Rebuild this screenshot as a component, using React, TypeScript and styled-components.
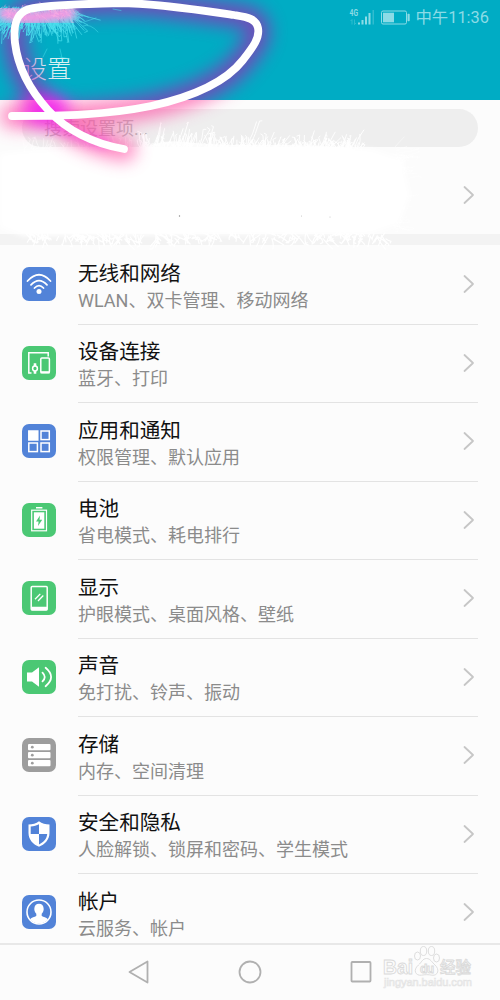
import React from "react";
import styled, { createGlobalStyle } from "styled-components";

const GlobalStyle = createGlobalStyle`
  body { margin: 0; background: #fcfcfc; }
  * { box-sizing: border-box; }
`;

const Screen = styled.div`
  position: relative;
  width: 500px;
  height: 1000px;
  overflow: hidden;
  display: flex;
  flex-direction: column;
  background: #fcfcfc;
  font-family: Roboto, "Noto Sans CJK SC", sans-serif;
`;

const Header = styled.header`
  height: 100px;
  flex: none;
  background: #00acc4;
  display: flex;
  flex-direction: column;
`;

const StatusBar = styled.div`
  height: 35px;
  padding: 1px 11px 0 0;
  display: flex;
  align-items: center;
  justify-content: flex-end;
  color: #8cdbe6;
  font-size: 16.4px;
  line-height: 34px;
`;

const StatusIcons = styled.svg`
  width: 64px;
  height: 34px;
  margin-right: 3px;
`;

const PageTitle = styled.h1`
  margin: 17px 0 0 22.5px;
  font-size: 24.5px;
  line-height: 36px;
  font-weight: 300;
  color: #d9f1f3;
`;

const SearchBox = styled.div`
  height: 38px;
  flex: none;
  margin: 9px 22px 0;
  padding-left: 22px;
  border-radius: 19px;
  background: #eeeeee;
  color: #b9b9b9;
  font-size: 18px;
  line-height: 40px;
`;

const AccountRow = styled.div`
  height: 87px;
  flex: none;
  display: flex;
  justify-content: flex-end;
  padding: 38px 25px 0 0;
`;

const Band = styled.div`
  height: 11px;
  flex: none;
  background: #f3f3f3;
`;

const List = styled.main`
  flex: 1;
  min-height: 0;
  overflow: hidden;
  padding-top: 1px;
`;

const Row = styled.div`
  height: 78.5px;
  display: flex;
  padding-left: 22px;
`;

const Tile = styled.svg<{ $color: string }>`
  width: 34px;
  height: 34px;
  flex: none;
  margin: 21px 22px 0 0;
  border-radius: 7px;
  background: ${(p) => p.$color};
`;

const RowBody = styled.div`
  flex: 1;
  margin-right: 22px;
  display: flex;
  justify-content: space-between;
  border-bottom: 1.5px solid #e3e3e3;
`;

const Labels = styled.div`
  padding-top: 12.5px;
  white-space: nowrap;
`;

const Name = styled.div`
  font-size: 20.6px;
  line-height: 30px;
  color: #111;
`;

const Detail = styled.div`
  font-size: 18px;
  line-height: 23px;
  color: #8b8b8b;
`;

const Arrow = styled.svg`
  width: 12px;
  height: 20px;
  flex: none;
`;

const ArrowSlot = styled.div`
  padding: 28px 3px 0 0;
`;

const NavBar = styled.nav`
  height: 57px;
  flex: none;
  border-top: 2px solid #e8e8e8;
  display: flex;
  justify-content: space-between;
  padding: 15px 127px 0 127px;
`;

const NavIcon = styled.svg`
  width: 24px;
  height: 24px;
  fill: none;
  stroke: #b0b0b0;
  stroke-width: 1.8;
  stroke-linejoin: round;
`;

const Doodle = styled.svg`
  position: absolute;
  left: 0;
  top: 0;
  width: 500px;
  height: 270px;
  pointer-events: none;
`;

const Watermark = styled.svg`
  position: absolute;
  left: 378px;
  top: 940px;
  width: 104px;
  height: 52px;
`;

const Chevron = () => (
  <Arrow viewBox="0 0 12 20" fill="none" stroke="#c6c6c6" strokeWidth="1.8" strokeLinecap="round" strokeLinejoin="round">
    <path d="M1.5 2 10 10 1.5 18" />
  </Arrow>
);

const BLUE = "#5283d8";
const GREEN = "#4bc874";
const GREY = "#9d9d9d";

const icons = {
  wifi: (
    <g fill="none" stroke="#fff" strokeWidth="1.8" strokeLinecap="round">
      <path d="M5.5 14Q17 1.5 28.5 14M9 17.8Q17 9.3 25 17.8M12.5 21Q17 16.3 21.5 21" />
      <circle cx="17" cy="24.5" r="2.5" fill="#fff" stroke="none" />
    </g>
  ),
  devices: (
    <g fill="none" stroke="#fff" strokeWidth="1.5">
      <path d="M9.5 27H6.8V6.8H26.2V10.5" />
      <rect x="18.8" y="12" width="8.6" height="14.5" rx="1" />
      <path d="M18.5 26.3h9.2" strokeWidth="2.2" />
      <circle cx="13" cy="22.5" r="2.4" />
      <path d="M13 17.3v2.8M13 25v2.8" strokeWidth="2.6" />
    </g>
  ),
  apps: (
    <g fill="none" stroke="#fff" strokeWidth="1.5">
      <rect x="6.8" y="7" width="9" height="9" fill="#fff" />
      <rect x="19" y="7" width="8.3" height="8.6" />
      <rect x="6.8" y="19" width="8.6" height="8.6" />
      <rect x="19" y="19" width="8.3" height="8.6" />
    </g>
  ),
  battery: (
    <g fill="none" stroke="#fff">
      <path d="M14 4.8h6.4" strokeWidth="1.5" />
      <rect x="9.7" y="7.2" width="14.8" height="20.6" strokeWidth="1.2" />
      <rect x="11.9" y="9.3" width="10.4" height="16.4" fill="#fff" stroke="none" />
      <path d="M18 12.5 14 18.4h2.6L16 23l4.2-6.2h-2.7z" fill={GREEN} stroke="none" />
    </g>
  ),
  display: (
    <g fill="none" stroke="#fff" strokeWidth="1.5">
      <rect x="9.2" y="5.4" width="16" height="23.6" rx="1" />
      <path d="M9.2 27.5h16" strokeWidth="3.5" />
      <path d="m13 18.3 5.3-5.4M16 20l5.3-5.5" strokeWidth="1.3" />
    </g>
  ),
  sound: (
    <g fill="none" stroke="#fff" strokeWidth="1.8" strokeLinecap="round">
      <path d="M5 12.4h5l7-5.2v19.6l-7-5.2H5z" fill="#fff" stroke="none" />
      <path d="M20.5 12.6q4.5 4.4 0 8.8M23.6 7.8q11 9.2 0 18.4" />
    </g>
  ),
  storage: (
    <g fill="#fff">
      <rect x="6" y="6" width="22.5" height="6.3" rx="1" />
      <rect x="6" y="14" width="22.5" height="6.3" rx="1" />
      <rect x="6" y="22" width="22.5" height="6.3" rx="1" />
      <g fill={GREY}>
        <circle cx="10.3" cy="9.2" r="1.4" />
        <circle cx="10.3" cy="17.2" r="1.4" />
        <circle cx="10.3" cy="25.2" r="1.4" />
      </g>
    </g>
  ),
  shield: (
    <g>
      <path d="M17 4.2C14 6.5 10.5 7.3 6.5 7.5V16c0 7 5 11.5 10.5 13.8C22.5 27.5 27.5 23 27.5 16V7.5C23.5 7.3 20 6.5 17 4.2z" fill="#fff" />
      <path d="M17 7.2V17H8.7V9.4C12 9.2 14.8 8.5 17 7.2zM17 17h8.2c-.4 5-3.7 8.3-8.2 10.4z" fill={BLUE} />
    </g>
  ),
  user: (
    <g>
      <circle cx="17" cy="17" r="12" fill={BLUE} stroke="#fff" strokeWidth="1.6" />
      <path d="M8 24.2c2-1.8 4.3-2 6.3-3.1v-2.3c-1.3-1.2-2-3-2-4.8 0-3.4 1.9-5.2 4.7-5.2s4.7 1.8 4.7 5.2c0 1.8-.7 3.6-2 4.8v2.3c2 1.1 4.3 1.3 6.3 3.1A11.5 11.5 0 0 1 8 24.2z" fill="#fff" />
    </g>
  ),
};

const rows: { icon: keyof typeof icons; color: string; name: string; detail: string }[] = [
  { icon: "wifi", color: BLUE, name: "无线和网络", detail: "WLAN、双卡管理、移动网络" },
  { icon: "devices", color: GREEN, name: "设备连接", detail: "蓝牙、打印" },
  { icon: "apps", color: BLUE, name: "应用和通知", detail: "权限管理、默认应用" },
  { icon: "battery", color: GREEN, name: "电池", detail: "省电模式、耗电排行" },
  { icon: "display", color: GREEN, name: "显示", detail: "护眼模式、桌面风格、壁纸" },
  { icon: "sound", color: GREEN, name: "声音", detail: "免打扰、铃声、振动" },
  { icon: "storage", color: GREY, name: "存储", detail: "内存、空间清理" },
  { icon: "shield", color: BLUE, name: "安全和隐私", detail: "人脸解锁、锁屏和密码、学生模式" },
  { icon: "user", color: BLUE, name: "帐户", detail: "云服务、帐户" },
];

// Seeded generator keeps the brush bristles identical on each render.
const seeded = (seed: number) => () => {
  seed = (seed * 16807) % 2147483647;
  return seed / 2147483647;
};

const bristles = (
  count: number,
  seed: number,
  origin: (r: () => number) => [number, number],
  reach: (x: number, y: number, r: () => number) => [number, number]
) => {
  const r = seeded(seed);
  let d = "";
  for (let i = 0; i < count; i++) {
    const [x, y] = origin(r);
    const [dx, dy] = reach(x, y, r);
    const bend = (r() - 0.5) * 4;
    d += `M${x.toFixed(1)} ${y.toFixed(1)}q${(dx / 2 + bend).toFixed(1)} ${(dy / 2).toFixed(1)} ${dx.toFixed(1)} ${dy.toFixed(1)}`;
    if (r() > 0.6) d += `l${((r() - 0.5) * 6).toFixed(1)} ${(r() * 4 - 2).toFixed(1)}`;
  }
  return d;
};

const topGrass = bristles(
  240, 77,
  (r) => [140 + r() * 225, 147 + r() * 4],
  (x, _y, r) => [(r() - 0.4) * 13, -4 - Math.pow(r(), 1.3) * (x < 215 ? 14 : 9)]
);
const tallGrass = bristles(
  22, 19,
  (r) => [155 + Math.pow(r(), 1.2) * 220, 146],
  (x, _y, r) => [r() * 10, (x < 255 ? -16 : -7) - r() * 9]
);
const leftGrass = bristles(
  45, 31,
  (r) => [24 + r() * 110, 147 + r() * 5],
  (_x, _y, r) => [(r() - 0.5) * 9, -3 - r() * 9]
);
const bottomGrass = bristles(
  210, 9,
  (r) => [24 + r() * 362, 231 + r() * 8],
  (_x, _y, r) => [(r() - 0.4) * 18, 1 + r() * 10]
);
const sideGrass = bristles(
  50, 51,
  (r) => [390 + r() * 8, 145 + r() * 85],
  (_x, y, r) => [4 + r() * 20, (r() - 0.5) * 12 + (y - 190) * 0.1]
);
// Sparks fan out from the glowing core in the corner.
const spark = bristles(
  320, 123,
  (r) => [r() * 72, 7 + r() * 10],
  (x, _y, r) => {
    const len = 5 + Math.pow(r(), 1.5) * 26;
    const angle = Math.PI / 2 + (38 - x) * 0.021 + (r() - 0.5) * 1.3;
    return [Math.cos(angle) * len, Math.sin(angle) * len * 0.95];
  }
);
const sparkCore = bristles(
  70, 83,
  (r) => [2 + r() * 70, 4 + r() * 13],
  (_x, _y, r) => [(r() - 0.3) * 10, (r() - 0.2) * 9]
);

const LOOP =
  "M12 116C64 116 107 115 151 106C192 97 225 83 243 60C253 47 260 38 258 28C256 18 246 17 234 15C200 10 154 3 120 3C90 4 50 4 29 9C16 13 13 25 15 43C18 68 29 89 48 110C66 130 94 144 124 149";

const HandDrawing = () => (
  <Doodle viewBox="0 0 500 270" fill="none" strokeLinecap="round">
    <defs>
      <filter id="glow" x="-30%" y="-50%" width="160%" height="200%" colorInterpolationFilters="sRGB">
        <feGaussianBlur stdDeviation="8.5" />
      </filter>
      <filter id="soft" x="-30%" y="-100%" width="160%" height="300%" colorInterpolationFilters="sRGB">
        <feGaussianBlur stdDeviation="4" />
      </filter>
      <filter id="feather" x="-10%" y="-20%" width="120%" height="140%">
        <feGaussianBlur stdDeviation="2.5" />
      </filter>
      <clipPath id="overHeader"><rect width="500" height="100" /></clipPath>
      <clipPath id="overPage"><rect y="100" width="500" height="170" /></clipPath>
    </defs>
    <path d="M0 154C60 146 110 152 140 149H370L404 160V170L410 195L399 224L370 234L23 236L0 227Z" fill="#fff" filter="url(#feather)" />
    <path d="M140 150Q160 139 185 142T235 145T290 145T350 148L365 155L140 160Z" fill="#fff" opacity=".8" />
    <path d={topGrass} stroke="#fff" strokeWidth="1" opacity=".9" />
    <path d={tallGrass} stroke="#fff" strokeWidth="0.9" />
    <path d={leftGrass} stroke="#fff" strokeWidth="0.8" opacity="0.7" />
    <path d={bottomGrass} stroke="#fff" strokeWidth="1.2" />
    <path d={sideGrass} stroke="#fff" strokeWidth="0.7" opacity=".6" />
    <g clipPath="url(#overHeader)">
      <path d={LOOP} stroke="#a520b4" strokeWidth="24" opacity="0.68" filter="url(#glow)" />
    </g>
    <g clipPath="url(#overPage)">
      <path d={LOOP} stroke="#ff4aa2" strokeWidth="24" opacity="0.68" filter="url(#glow)" />
    </g>
    <ellipse cx="46" cy="110" rx="23" ry="15" fill="#ef1cf5" opacity="0.9" filter="url(#glow)" />
    <path d="M58 126Q75 137 105 143" stroke="#f52cec" strokeWidth="12" opacity="0.35" filter="url(#soft)" />
    <path d={spark} stroke="#4be2ee" strokeWidth="0.8" opacity="0.85" />
    <path d="M83 26Q90 23 98 32M84 22L96 18M47 49Q45 53 43 57M60 49l2 9M60 57l10 2M113 9l8 1.5" stroke="#4be2ee" strokeWidth=".7" opacity=".7" />
    <path d="M4 13L30 18Q50 15 70 13" stroke="#ff94e2" strokeWidth="13" filter="url(#soft)" />
    <path d={sparkCore} stroke="#ffb0e2" strokeWidth="0.7" opacity=".6" />
    <path d={LOOP} stroke="#fff" strokeWidth="7.8" strokeLinejoin="round" />
    <g fill="#888">
      <circle cx="179.5" cy="216" r="0.7" />
      <circle cx="301.5" cy="216" r="0.4" />
      <circle cx="330" cy="217" r="0.4" />
    </g>
  </Doodle>
);

const BaiduMark = () => (
  <Watermark viewBox="0 0 104 52" fill="#fcfcfc" stroke="#dadada" strokeWidth="0.9" fontFamily='"Liberation Sans", "Noto Sans CJK SC", sans-serif'>
    <text x="5" y="34" fontSize="20" fontWeight="700" textLength="30" lengthAdjust="spacingAndGlyphs">Bai</text>
    <ellipse cx="39.5" cy="16" rx="3" ry="4" />
    <ellipse cx="45.5" cy="11" rx="3.2" ry="4.5" />
    <ellipse cx="53.5" cy="11" rx="3.2" ry="4.5" />
    <ellipse cx="58.5" cy="18" rx="3" ry="4" />
    <path d="M48.5 18.5c-4 0-5 4-8 6.5-6 5-3 11 3 10.2 3.5-.7 7-.7 10.5 0 6 .8 8-5.7 3-10.2-3-2.5-4.5-6.5-8.5-6.5z" />
    <text x="42" y="33" fontSize="12" fontWeight="700" textLength="14">du</text>
    <text x="62" y="33" fontSize="15.5" fontWeight="500" textLength="31">经验</text>
    <text x="6" y="46" fontSize="11" stroke="#e4e4e4" strokeWidth="0.7" textLength="88">jingyan.baidu.com</text>
  </Watermark>
);

export default function App() {
  return (
    <Screen>
      <GlobalStyle />
      <Header>
        <StatusBar>
          <StatusIcons viewBox="0 0 64 34">
            <g fill="#8cdbe6">
              <text x="1.5" y="15" fontSize="9" fontWeight="700" textLength="8.5" lengthAdjust="spacingAndGlyphs">4G</text>
              <path d="M10 21.5h2V23.5h-2zM13.500 19h2v4.5h-2zM17 15.5h2v8h-2zM20.5 12h2v11.5h-2z" />
              <path d="M24.5 9h1.5V23.5h-1.5z" opacity=".35" />
              <path d="m2.5 20 1.5-1.5V23.5M6.5 18.5V23.5l1.5-1.5" stroke="#8cdbe6" strokeWidth=".8" fill="none" opacity=".4" />
              <rect x="35" y="11.7" width="11" height="9.6" />
              <rect x="59.5" y="12.7" width="2.2" height="7.5" rx=".7" />
            </g>
            <rect x="33.5" y="10" width="25" height="13" rx="1.5" fill="none" stroke="#8cdbe6" />
          </StatusIcons>
          中午11:36
        </StatusBar>
        <PageTitle>设置</PageTitle>
      </Header>
      <SearchBox>搜索设置项...</SearchBox>
      <AccountRow>
        <Chevron />
      </AccountRow>
      <Band />
      <List>
        {rows.map((row) => (
          <Row key={row.name}>
            <Tile viewBox="0 0 34 34" $color={row.color}>{icons[row.icon]}</Tile>
            <RowBody>
              <Labels>
                <Name>{row.name}</Name>
                <Detail>{row.detail}</Detail>
              </Labels>
              <ArrowSlot><Chevron /></ArrowSlot>
            </RowBody>
          </Row>
        ))}
      </List>
      <NavBar>
        <NavIcon viewBox="0 0 24 24"><path d="M2.5 12 20.5 1.5v21z" /></NavIcon>
        <NavIcon viewBox="0 0 24 24"><circle cx="12" cy="12" r="10.5" /></NavIcon>
        <NavIcon viewBox="0 0 24 24"><rect x="2.5" y="2" width="19" height="19.5" rx=".8" /></NavIcon>
      </NavBar>
      <HandDrawing />
      <BaiduMark />
    </Screen>
  );
}
